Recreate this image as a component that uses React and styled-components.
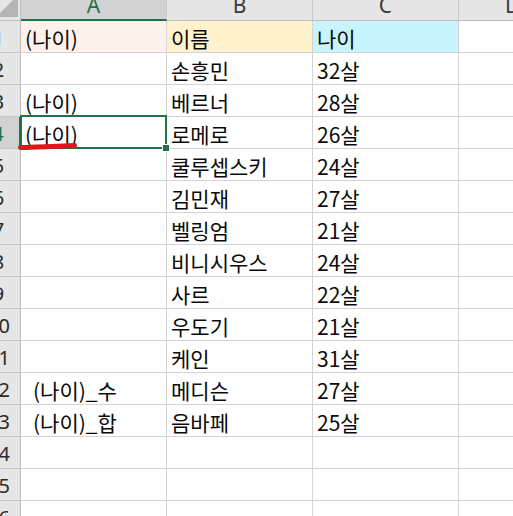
import React from "react";
import styled, { createGlobalStyle, css } from "styled-components";

const GREEN = "#217346";

const GlobalStyle = createGlobalStyle`
  html, body {
    margin: 0;
    padding: 0;
    background: #ffffff;
    overflow: hidden;
  }
  body {
    font-family: "Noto Sans CJK KR", "Noto Sans", sans-serif;
  }
`;

const Sheet = styled.div`
  display: grid;
  grid-template-columns: 44px 146px 146px 146px 120px;
  grid-template-rows: 31px repeat(16, 32px);
  margin: -10px 0 0 -23px;
  width: 602px;
`;

const Corner = styled.div`
  position: relative;
  background: #e6e6e6;
  border-right: 1px solid #bdbdbd;
  border-bottom: 1px solid #bdbdbd;
  box-sizing: border-box;
  svg {
    position: absolute;
    right: 2px;
    bottom: 3px;
  }
`;

const ColHead = styled.div`
  box-sizing: border-box;
  display: flex;
  align-items: center;
  justify-content: center;
  padding-top: 0;
  background: ${(p) => (p.$active ? "#d2d2d2" : "#e6e6e6")};
  border-right: 1px solid #c8c8c8;
  border-bottom: ${(p) => (p.$active ? `2px solid ${GREEN}` : "1px solid #bdbdbd")};
  color: ${(p) => (p.$active ? GREEN : "#3a3a3a")};
  font-family: "Noto Sans", "Open Sans", sans-serif;
  font-size: 21px;
  white-space: nowrap;
  overflow: hidden;
  ${(p) =>
    p.$clip &&
    css`
      justify-content: flex-start;
      padding-left: 46px;
    `}
`;

const RowHead = styled.div`
  box-sizing: border-box;
  display: flex;
  align-items: center;
  justify-content: center;
  padding-top: 2px;
  background: ${(p) => (p.$active ? "#d2d2d2" : "#e6e6e6")};
  border-bottom: 1px solid #c8c8c8;
  border-right: ${(p) => (p.$active ? `2px solid ${GREEN}` : "1px solid #bdbdbd")};
  color: ${(p) => (p.$active ? GREEN : "#2a2a2a")};
  font-family: "Noto Sans", "Open Sans", sans-serif;
  font-size: 20px;
`;

const Cell = styled.div`
  position: relative;
  box-sizing: border-box;
  display: flex;
  align-items: center;
  padding: 3px 0 0 ${(p) => (p.$indent ? 12 : 4)}px;
  background: ${(p) => p.$bg || "#ffffff"};
  border-right: 1px solid #d4d4d4;
  border-bottom: 1px solid #d4d4d4;
  color: #0a0a0a;
  font-size: 21px;
  white-space: nowrap;
  ${(p) =>
    p.$selected &&
    css`
      &::after {
        content: "";
        position: absolute;
        left: -1px;
        top: -2px;
        right: -1px;
        bottom: -1px;
        border: 2px solid ${GREEN};
        pointer-events: none;
      }
    `}
`;

const FillHandle = styled.span`
  position: absolute;
  right: -4px;
  bottom: -4px;
  width: 6px;
  height: 6px;
  background: ${GREEN};
  border: 1px solid #ffffff;
  z-index: 2;
`;

const Underline = styled.svg`
  position: absolute;
  left: -3px;
  top: 25px;
  overflow: visible;
  z-index: 3;
`;

const rows = [
  ["(나이)", "이름", "나이"],
  ["", "손흥민", "32살"],
  ["(나이)", "베르너", "28살"],
  ["(나이)", "로메로", "26살"],
  ["", "쿨루셉스키", "24살"],
  ["", "김민재", "27살"],
  ["", "벨링엄", "21살"],
  ["", "비니시우스", "24살"],
  ["", "사르", "22살"],
  ["", "우도기", "21살"],
  ["", "케인", "31살"],
  ["(나이)_수", "메디슨", "27살"],
  ["(나이)_합", "음바페", "25살"],
  ["", "", ""],
  ["", "", ""],
  ["", "", ""],
];

const headerBg = ["#fdf1ec", "#fff2cc", "#c8f5fd"];

export default function App() {
  return (
    <>
      <GlobalStyle />
      <Sheet>
        <Corner>
          <svg width="22" height="22" viewBox="0 0 22 22">
            <polygon points="22,0 22,22 0,22" fill="#b5b5b5" />
          </svg>
        </Corner>
        <ColHead $active>A</ColHead>
        <ColHead>B</ColHead>
        <ColHead>C</ColHead>
        <ColHead $clip>D</ColHead>
        {rows.map((r, i) => {
          const n = i + 1;
          const selected = n === 4;
          return (
            <React.Fragment key={n}>
              <RowHead $active={selected}>{n}</RowHead>
              <Cell
                $bg={n === 1 ? headerBg[0] : undefined}
                $indent={n === 12 || n === 13}
                $selected={selected}
              >
                {r[0]}
                {selected && (
                  <>
                    <FillHandle />
                    <Underline width="62" height="8" viewBox="0 0 62 8">
                      <path
                        d="M2.5 5.6 C 18 4.8, 40 4.2, 56.5 3.6"
                        stroke="#e3141b"
                        strokeWidth="5"
                        strokeLinecap="round"
                        fill="none"
                      />
                    </Underline>
                  </>
                )}
              </Cell>
              <Cell $bg={n === 1 ? headerBg[1] : undefined}>{r[1]}</Cell>
              <Cell $bg={n === 1 ? headerBg[2] : undefined}>{r[2]}</Cell>
              <Cell />
            </React.Fragment>
          );
        })}
      </Sheet>
    </>
  );
}
